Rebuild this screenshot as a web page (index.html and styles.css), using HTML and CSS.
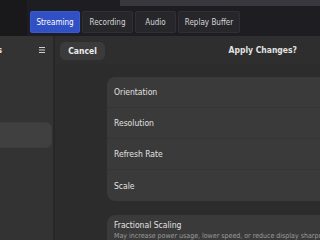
FILE: index.html
```html
<!DOCTYPE html>
<html lang="en">
<head>
  <meta charset="UTF-8" />
  <meta name="viewport" content="width=device-width, initial-scale=1.0" />
  <title>Displays</title>
  <link rel="stylesheet" href="styles.css">
</head>
<body>
  <div class="obs">
    <div class="obs-left"></div>
    <div class="obs-main">
      <div class="obs-top">
        <span class="obs-label"></span>
        <span class="obs-field"></span>
      </div>
      <div class="tabs">
        <button class="tab active">Streaming</button>
        <button class="tab">Recording</button>
        <button class="tab">Audio</button>
        <button class="tab">Replay Buffer</button>
      </div>
    </div>
  </div>

  <div class="settings">
    <aside class="sidebar">
      <div class="side-head">
        <span class="side-title">Settings</span>
        <svg class="menu-icon" width="8" height="8" viewBox="0 0 8 8">
          <path d="M1 1.5h6M1 4h6M1 6.5h6" stroke="#cfcfcf" stroke-width="1.1" />
        </svg>
      </div>
      <!-- row labels sit off the left edge of the screen -->
      <div class="side-list">
        <div class="side-item"></div>
        <div class="side-item"></div>
        <div class="side-item selected"></div>
        <div class="side-item"></div>
      </div>
    </aside>

    <main class="content">
      <div class="head">
        <button class="btn">Cancel</button>
        <span class="head-title">Apply Changes?</span>
      </div>
      <div class="page">
        <div class="card">
          <div class="row">Orientation</div>
          <div class="row">Resolution</div>
          <div class="row">Refresh Rate</div>
          <div class="row">Scale</div>
        </div>
        <div class="card">
          <div class="row tall">
            <span class="row-title">Fractional Scaling</span>
            <span class="row-sub">May increase power usage, lower speed, or reduce display sharpness.</span>
          </div>
        </div>
      </div>
    </main>
  </div>
</body>
</html>
```

FILE: styles.css
```css
body {
  margin: 0;
  width: 320px;
  height: 240px;
  overflow: hidden;
  background: #2c2c2c;
  color: #e2e2e2;
  font-family: "DejaVu Sans Condensed", "DejaVu Sans", sans-serif;
}
button {
  font-family: inherit;
  border: none;
  padding: 0;
  cursor: pointer;
  white-space: nowrap;
}

/* obs window behind */
.obs {
  display: flex;
  height: 36px;
  background: #1e1e22;
}
.obs-left {
  width: 27px;
  flex-shrink: 0;
  background: #19191c;
}
.obs-main {
  flex: 1;
  min-width: 0;
  display: flex;
  flex-direction: column;
}
.obs-top {
  height: 8px;
  display: flex;
  overflow: hidden;
}
.obs-label {
  margin-left: 66px;
  width: 17px;
  height: 2px;
  background: #55555a;
}
.obs-field {
  flex-shrink: 0;
  margin-left: 27px;
  width: 200px;
  height: 6px;
  background: #38383e;
}
.tabs {
  display: flex;
  gap: 2px;
  padding: 3px 3px 0;
}
.tab {
  height: 22px;
  width: 50px;
  background: #26262b;
  border: 1px solid #2f2f35;
  border-radius: 2px;
  color: #d6d6d6;
  font-size: 8px;
}
.tab.active {
  background: #3050c4;
  border-color: #3a5ad0;
  color: #fff;
}
.tab:nth-child(2) { width: 51px; }
.tab:nth-child(3) { width: 41px; }
.tab:nth-child(4) { width: 62px; }

/* settings window */
.settings {
  display: flex;
  height: 204px;
}
.sidebar {
  width: 200px;
  margin-left: -147px;
  flex-shrink: 0;
  background: #333333;
  border-right: 2px solid #272727;
  overflow: hidden;
}
.side-head {
  height: 28px;
  display: flex;
  align-items: center;
  justify-content: flex-end;
  padding-right: 7px;
}
.side-title {
  flex-shrink: 0;
  font-weight: bold;
  font-size: 9px;
  margin-right: 36px;
}
.menu-icon {
  display: block;
}
.side-list {
  display: flex;
  flex-direction: column;
  gap: 4px;
  padding: 0 1px 0 6px;
  margin-top: -2px;
}
.side-item {
  height: 26px;
  border-radius: 6px;
}
.side-item.selected {
  background: #404040;
  border: 1px solid #3c3c3c;
  height: 24px;
}

.content {
  flex: 1;
  display: flex;
  flex-direction: column;
  overflow: hidden;
}
.head {
  height: 28px;
  flex-shrink: 0;
  display: flex;
  align-items: center;
  padding-left: 5px;
  background: #2e2e2e;
}
.btn {
  width: 45px;
  height: 18px;
  margin-top: 2px;
  background: #3b3b3b;
  border-radius: 5px;
  color: #eee;
  font-weight: bold;
  font-size: 8.5px;
}
.head-title {
  margin-left: auto;
  margin-right: 23px;
  font-weight: bold;
  font-size: 8.5px;
}
.page {
  display: flex;
  flex-direction: column;
  gap: 14px;
  padding: 13px 0 0 52px;
}
.card {
  width: 260px;
  flex-shrink: 0;
  background: #3a3a3a;
  border-radius: 8px;
}
.row {
  height: 31px;
  display: flex;
  align-items: center;
  padding-left: 7px;
  font-size: 8.5px;
  border-bottom: 1px solid #353535;
  box-sizing: border-box;
}
.row:last-child {
  border-bottom: none;
}
.row.tall {
  height: 40px;
  flex-direction: column;
  align-items: flex-start;
  justify-content: flex-start;
  padding-top: 5px;
}
.row-title {
  line-height: 11px;
}
.row-sub {
  font-size: 7px;
  color: #9a9a9a;
  white-space: nowrap;
  line-height: 10px;
}
```
